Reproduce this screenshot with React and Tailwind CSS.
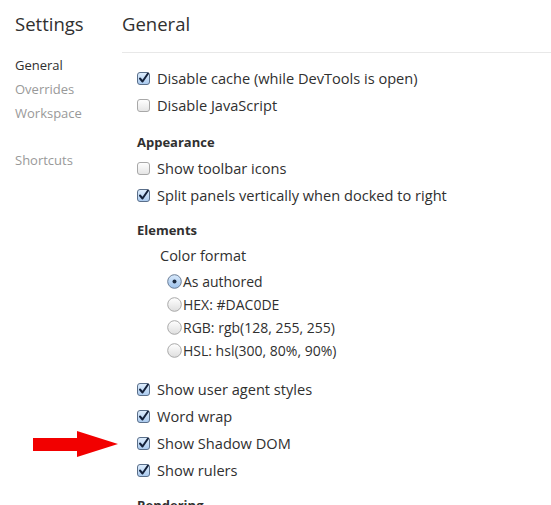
import React from "react";

function Check({ checked }) {
  return (
    <svg width="13" height="13" viewBox="0 0 13 13" className="shrink-0">
      <defs>
        <linearGradient id={checked ? "gc" : "gu"} x1="0" y1="0" x2="0" y2="1">
          {checked ? (
            <>
              <stop offset="0" stopColor="#dfeefd" />
              <stop offset="1" stopColor="#a9c9ee" />
            </>
          ) : (
            <>
              <stop offset="0" stopColor="#ffffff" />
              <stop offset="1" stopColor="#e4e4e4" />
            </>
          )}
        </linearGradient>
      </defs>
      <rect x="0.5" y="0.5" width="12" height="12" rx="2.5" fill={`url(#${checked ? "gc" : "gu"})`} stroke={checked ? "#5a6f8a" : "#a8a8a8"} />
      {checked && (
        <path d="M3 6.5 L5.5 9.5 L11 1.5" fill="none" stroke="#14213a" strokeWidth="2" strokeLinecap="round" strokeLinejoin="round" />
      )}
    </svg>
  );
}

function Radio({ checked }) {
  return (
    <svg width="15" height="15" viewBox="0 0 15 15" className="shrink-0">
      <defs>
        <linearGradient id="rc" x1="0" y1="0" x2="0" y2="1">
          <stop offset="0" stopColor="#d8e9fb" />
          <stop offset="1" stopColor="#9fc3ec" />
        </linearGradient>
        <linearGradient id="ru" x1="0" y1="0" x2="0" y2="1">
          <stop offset="0" stopColor="#ffffff" />
          <stop offset="1" stopColor="#dedede" />
        </linearGradient>
      </defs>
      <circle cx="7.5" cy="7.5" r="6.8" fill={checked ? "url(#rc)" : "url(#ru)"} stroke={checked ? "#6a7d96" : "#a9a9a9"} />
      {checked && <circle cx="7.5" cy="7.5" r="2" fill="#1d2b40" />}
    </svg>
  );
}

function CheckRow({ checked, label }) {
  return (
    <div className="flex items-center h-[27px] gap-[7px] text-[14.6px]">
      <Check checked={checked} />
      <span>{label}</span>
    </div>
  );
}

function RadioRow({ checked, label }) {
  return (
    <div className="flex items-center h-[23px] pl-[30px] text-[14px]">
      <Radio checked={checked} />
      <span className="ml-px">{label}</span>
    </div>
  );
}

export default function App() {
  return (
    <div
      className="relative flex w-[551px] h-[505px] overflow-hidden bg-white text-[#303030]"
      style={{ fontFamily: '"Open Sans", "DejaVu Sans", sans-serif' }}
    >
      <div className="w-[122px] shrink-0 pl-[15px]">
        <div className="h-[52px] pt-[10px] text-[18.5px] leading-[28px]">Settings</div>
        <div className="text-[13px] mt-[1px]">
          <div className="h-[24px] leading-[24px]">General</div>
          <div className="h-[24px] leading-[24px] text-[#999]">Overrides</div>
          <div className="h-[24px] leading-[24px] text-[#999]">Workspace</div>
          <div className="h-[24px] leading-[24px] mt-[23px] text-[#999]">Shortcuts</div>
        </div>
      </div>
      <div className="flex-1">
        <div className="h-[53px] pt-[10px] text-[18.5px] leading-[28px] border-b border-[#e8e8e8]">General</div>
        <div className="pl-[15px] pt-[12px]">
          <CheckRow checked label="Disable cache (while DevTools is open)" />
          <CheckRow label="Disable JavaScript" />
          <div className="mt-[14px] mb-[4px] h-[18px] leading-[18px] font-bold text-[13px]">Appearance</div>
          <CheckRow label="Show toolbar icons" />
          <CheckRow checked label="Split panels vertically when docked to right" />
          <div className="mt-[12px] h-[18px] leading-[18px] font-bold text-[13px]">Elements</div>
          <div className="mt-[6px] h-[22px] leading-[22px] pl-[23px] text-[14.5px]">Color format</div>
          <div className="mt-[3px]">
            <RadioRow checked label="As authored" />
            <RadioRow label="HEX: #DAC0DE" />
            <RadioRow label="RGB: rgb(128, 255, 255)" />
            <RadioRow label="HSL: hsl(300, 80%, 90%)" />
          </div>
          <div className="mt-[14px]">
            <CheckRow checked label="Show user agent styles" />
            <CheckRow checked label="Word wrap" />
            <CheckRow checked label="Show Shadow DOM" />
            <CheckRow checked label="Show rulers" />
          </div>
          <div className="mt-[12px] h-[18px] leading-[18px] font-bold text-[13px]">Rendering</div>
        </div>
      </div>
      <svg className="absolute left-[33px] top-[431px]" width="86" height="27" viewBox="0 0 86 27">
        <polygon points="0,7 44,7 44,0 85,13 44,26 44,20 0,20" fill="#f20000" />
      </svg>
    </div>
  );
}
